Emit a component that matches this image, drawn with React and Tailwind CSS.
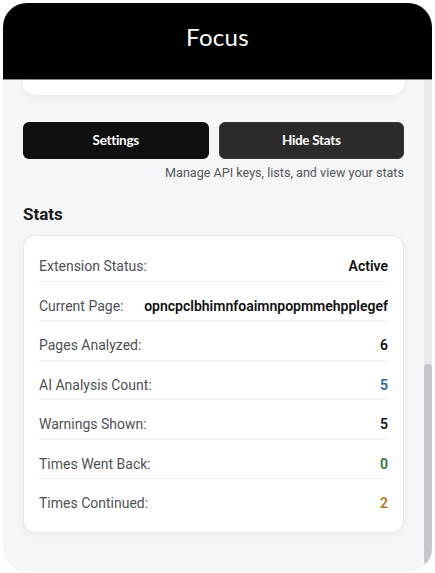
import React from "react";

const stats = [
  { label: "Extension Status:", value: "Active", color: "text-[#111111]" },
  { label: "Current Page:", value: "opncpclbhimnfoaimnpopmmehpplegef", color: "text-[#111111]" },
  { label: "Pages Analyzed:", value: "6", color: "text-[#111111]" },
  { label: "AI Analysis Count:", value: "5", color: "text-[#2563a6]" },
  { label: "Warnings Shown:", value: "5", color: "text-[#111111]" },
  { label: "Times Went Back:", value: "0", color: "text-[#2f7a3a]" },
  { label: "Times Continued:", value: "2", color: "text-[#b5761e]" },
];

const App = () => {
  return (
    <div
      className="w-[435px] h-[573px] bg-white p-[3px]"
      style={{ fontFamily: "Roboto, Inter, sans-serif" }}
    >
      <div className="w-[429px] h-[569px] rounded-[24px] overflow-hidden flex flex-col bg-[#f5f6f8]">
        {/* Header */}
        <div className="h-[77px] shrink-0 bg-black border-b border-[#8d8d8d] flex items-center justify-center pb-[9px]">
          <h1
            className="text-white text-[24px] font-normal tracking-[0.3px]"
            style={{ fontFamily: "Lato, sans-serif" }}
          >
            Focus
          </h1>
        </div>

        <div className="flex-1 flex min-h-0">
          {/* Main column */}
          <div className="w-[421px] px-5 flex flex-col">
            <div className="h-[15px] bg-white rounded-b-[12px] shadow-[0_2px_8px_rgba(0,0,0,0.06)]" />

            <div
              className="grid grid-cols-2 gap-[10px] mt-[27px]"
              style={{ fontFamily: "Lato, sans-serif" }}
            >
              <button className="h-[37px] rounded-[6px] bg-[#0f0f0f] text-white text-[13.5px] font-bold tracking-[-0.3px]">
                Settings
              </button>
              <button className="h-[37px] rounded-[6px] bg-[#2b2b2b] border border-[#3a3a3a] text-white text-[13.5px] font-bold tracking-[-0.3px]">
                Hide Stats
              </button>
            </div>
            <p className="mt-[5px] text-right text-[12.6px] leading-[18px] text-[#55565b]">
              Manage API keys, lists, and view your stats
            </p>

            <h2 className="mt-[20px] text-[17px] leading-6 font-bold text-[#1a1a1a]">
              Stats
            </h2>

            <div className="mt-[9px] bg-white border border-[#e6e7eb] rounded-[12px] shadow-[0_2px_8px_rgba(0,0,0,0.05)] px-[15px] pt-[6px] pb-[14.5px]">
              {stats.map((s, i) => (
                <div
                  key={s.label}
                  className={`flex items-center justify-between gap-4 pt-[14px] pb-[4.5px] leading-5 text-[14px] ${
                    i < stats.length - 1 ? "border-b border-[#efeff2]" : ""
                  }`}
                >
                  <span className="text-[#4f5056] whitespace-nowrap">{s.label}</span>
                  <span className={`font-semibold whitespace-nowrap ${s.color}`}>{s.value}</span>
                </div>
              ))}
            </div>
          </div>

          {/* Scrollbar */}
          <div className="w-[8px] bg-[#e9eaee] flex flex-col">
            <div className="h-[284px]" />
            <div className="h-[200px] bg-[#c5c7ce] rounded-full" />
          </div>
        </div>
      </div>
    </div>
  );
};

export default App;
